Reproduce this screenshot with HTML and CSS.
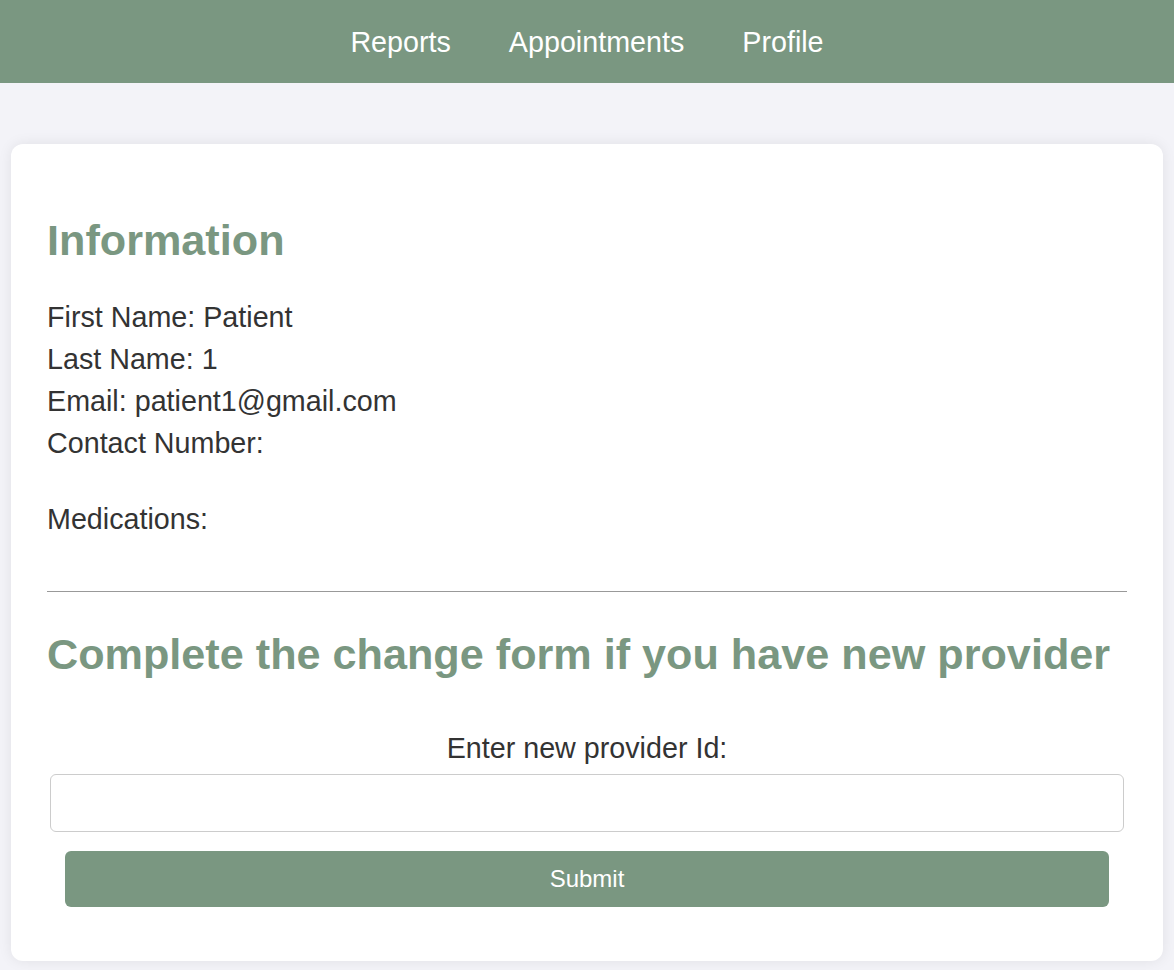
FILE: index.html
```html
<!DOCTYPE html>
<html lang="en">
<head>
<meta charset="utf-8">
<title>Profile</title>
<link rel="stylesheet" href="styles.css">
</head>
<body>
<nav class="topnav">
  <a class="nav-link" href="#">Reports</a>
  <a class="nav-link" href="#">Appointments</a>
  <a class="nav-link" href="#">Profile</a>
</nav>
<main class="page">
  <section class="card">
    <h1 class="title">Information</h1>
    <div class="info">
      <div class="info-line">First Name: Patient</div>
      <div class="info-line">Last Name: 1</div>
      <div class="info-line">Email: patient1@gmail.com</div>
      <div class="info-line">Contact Number:</div>
    </div>
    <div class="meds">Medications:</div>
    <hr class="divider">
    <h2 class="title title-second">Complete the change form if you have new provider</h2>
    <form class="form">
      <label class="form-label" for="pid">Enter new provider Id:</label>
      <input class="form-input" id="pid" type="text">
      <button class="form-button" type="button">Submit</button>
    </form>
  </section>
</main>
</body>
</html>
```
FILE: styles.css
```css
html, body {
  margin: 0;
  padding: 0;
}
body {
  background: #f3f3f8;
  font-family: "Liberation Sans", Arial, Helvetica, sans-serif;
  color: #333333;
}
.topnav {
  height: 83px;
  background: #7a9781;
  display: flex;
  justify-content: center;
  align-items: center;
  gap: 58px;
}
.nav-link {
  color: #ffffff;
  text-decoration: none;
  font-size: 28.7px;
  line-height: 34px;
}
.page {
  padding: 61px 11px 9px;
}
.card {
  background: #ffffff;
  border-radius: 12px;
  box-shadow: 0 0 14px rgba(0, 0, 0, 0.08);
  padding: 71px 36px 54px;
}
.title {
  margin: 0;
  color: #7a9781;
  font-size: 43.2px;
  line-height: 50px;
  font-weight: bold;
}
.info {
  margin-top: 31px;
  font-size: 28.7px;
  line-height: 42px;
}
.meds {
  margin-top: 34px;
  font-size: 28.7px;
  line-height: 42px;
}
.divider {
  margin: 51px 0 0;
  border: 0;
  border-top: 1px solid #999999;
  height: 0;
}
.title-second {
  margin-top: 37px;
}
.form {
  margin-top: 48px;
  display: flex;
  flex-direction: column;
  align-items: stretch;
}
.form-label {
  text-align: center;
  font-size: 28.7px;
  line-height: 42px;
}
.form-input {
  margin: 5px 3px 0;
  height: 58px;
  box-sizing: border-box;
  border: 1px solid #cccccc;
  border-radius: 6px;
  font-size: 24px;
  padding: 0 12px;
  background: #ffffff;
}
.form-button {
  margin: 19px 18px 0;
  height: 56px;
  border: 0;
  border-radius: 6px;
  background: #7a9781;
  color: #ffffff;
  font-family: "Liberation Sans", Arial, Helvetica, sans-serif;
  font-size: 24px;
}
```
